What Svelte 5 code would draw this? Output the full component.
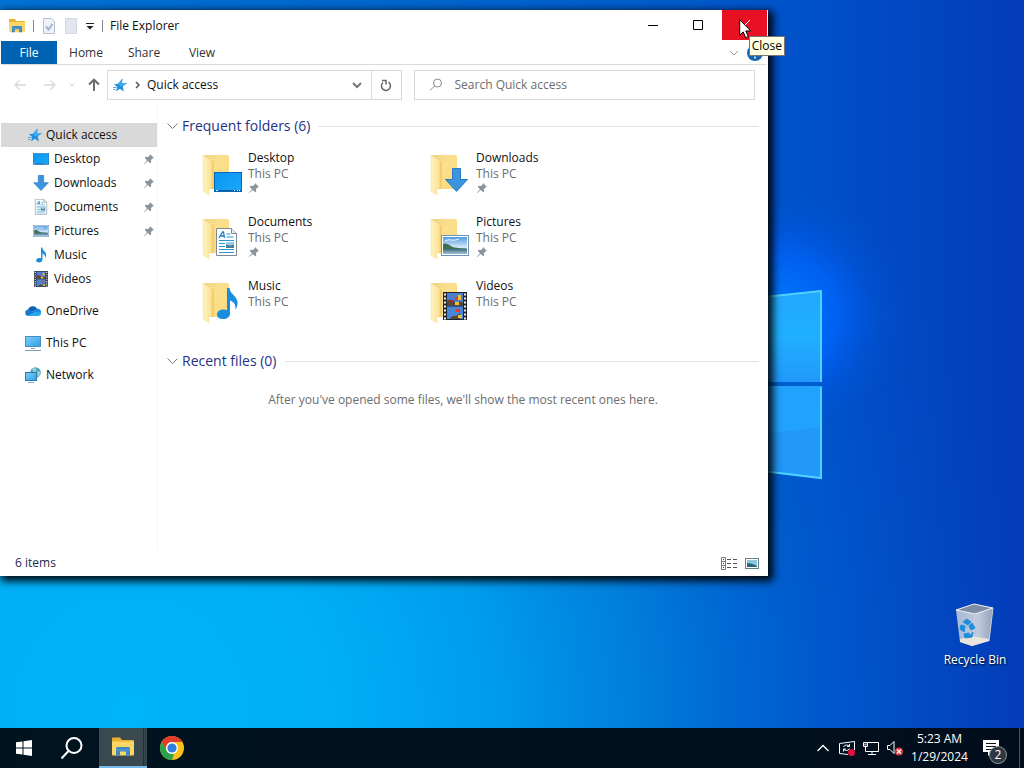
<script lang="ts">
	type Folder = {
		name: string;
		icon: string;
		pinned: boolean;
		box: [number, number, number, number];
	};

	// box: x, y, width, height of the badge drawn over the folder
	const folders: Folder[] = [
		{ name: 'Desktop', icon: 'desktop', pinned: true, box: [14, 22, 28, 20] },
		{ name: 'Downloads', icon: 'downloads', pinned: true, box: [17, 18, 23, 24] },
		{ name: 'Documents', icon: 'documents', pinned: true, box: [16, 14, 21, 28] },
		{ name: 'Pictures', icon: 'pictures', pinned: true, box: [13, 21, 28, 21] },
		{ name: 'Music', icon: 'music', pinned: false, box: [16, 9, 22, 33] },
		{ name: 'Videos', icon: 'videos', pinned: false, box: [15, 14, 24, 28] }
	];

	const places = [
		{ name: 'OneDrive', icon: 'onedrive' },
		{ name: 'This PC', icon: 'thispc' },
		{ name: 'Network', icon: 'network' }
	];

	const tabs = ['Home', 'Share', 'View'];

	let search = $state('');
	let frequentOpen = $state(true);
	let recentOpen = $state(true);
</script>

{#snippet icon(name: string, size: number = 16)}
	<svg class="icon" width={size} height={size} aria-hidden="true"><use href="#{name}" /></svg>
{/snippet}

<svg class="sprite" width="0" height="0" aria-hidden="true">
	<defs>
		<linearGradient id="g-screen" x1="0" y1="0" x2="1" y2="1">
			<stop offset="0" stop-color="#0a96f0" />
			<stop offset="1" stop-color="#1aa8fb" />
		</linearGradient>
		<linearGradient id="g-back" x1="0" y1="0" x2="1" y2="1">
			<stop offset="0" stop-color="#f0d486" />
			<stop offset="0.4" stop-color="#fae08e" />
			<stop offset="1" stop-color="#fbd978" />
		</linearGradient>
		<linearGradient id="g-flap" x1="0" y1="0" x2="1" y2="0">
			<stop offset="0" stop-color="#fff1c0" />
			<stop offset="1" stop-color="#fce294" />
		</linearGradient>
		<linearGradient id="g-sky" x1="0" y1="0" x2="0" y2="1">
			<stop offset="0" stop-color="#4f9be3" />
			<stop offset="0.6" stop-color="#d5e9f7" />
			<stop offset="1" stop-color="#a8cbe4" />
		</linearGradient>
		<linearGradient id="g-lake" x1="0" y1="0" x2="0" y2="1">
			<stop offset="0" stop-color="#3d6d80" />
			<stop offset="1" stop-color="#a3c3d4" />
		</linearGradient>
		<linearGradient id="g-pc" x1="0" y1="0" x2="1" y2="1">
			<stop offset="0" stop-color="#7fd0fa" />
			<stop offset="1" stop-color="#2e9fe6" />
		</linearGradient>
		<linearGradient id="g-bin" x1="0" y1="0" x2="1" y2="0">
			<stop offset="0" stop-color="#b9c6da" />
			<stop offset="0.6" stop-color="#d3d8e1" />
			<stop offset="1" stop-color="#a4acb9" />
		</linearGradient>
	</defs>

	<symbol id="desktop" viewBox="0 0 28 20">
		<rect x="0.5" y="0.5" width="27" height="19" fill="url(#g-screen)" stroke="#0768b4" />
		<path d="M1 18.5h26" stroke="#075b9e" />
		<path d="M2 18.5h2M20 18.5h1M23 18.5h1M25 18.5h1" stroke="#fff" />
	</symbol>
	<symbol id="downloads" viewBox="0 0 23 24">
		<path d="M7.500.5h8v11h7L11.500 23.400.500 11.500h7z" fill="#3b94e0" stroke="#2b7ac6" />
	</symbol>
	<symbol id="documents" viewBox="0 0 21 28">
		<path d="M.5.5h15l5 5v22H.5z" fill="#fff" stroke="#7d8a94" />
		<path d="M15.500.5v5h5" fill="#e8edf0" stroke="#7d8a94" />
		<path d="M3 10l3.500-6h1l1 6M4.500 8h4" fill="none" stroke="#1a82c8" stroke-width="1.300" />
		<path d="M10.500 6h4M10.500 9h7M3 12.500h15M3 15.500h6M3 18.500h6M3 21.500h15M3 24.500h15" stroke="#2b95cf" />
		<rect x="10" y="14" width="8" height="6" fill="#4f7f98" />
		<path d="M10 14h8v2.500l-4 1-4-1z" fill="#9fcbe8" />
	</symbol>
	<symbol id="pictures" viewBox="0 0 28 21">
		<rect x="0.5" y="0.5" width="27" height="20" fill="#fff" stroke="#6d94b5" />
		<rect x="2" y="2" width="24" height="17" fill="url(#g-sky)" />
		<path d="M2 9c3-1 5 0 8 2s7 2 16 2.500V15H2z" fill="#3f7053" />
		<rect x="2" y="14" width="24" height="5" fill="url(#g-lake)" />
		<path d="M4 6q3-2 6-1t8-1" fill="none" stroke="#e9f4fc" />
	</symbol>
	<symbol id="music" viewBox="0 0 22 33">
		<path d="M11 1h2.500c.5 6 7.500 8 8 14 .2 3-.5 5.500-2 8 .3-5-1-8-5.500-9.500V26c0 4-3 6-7 6-3.500 0-6-1.500-6-4.500S4 22.500 7.500 22.500c1.500 0 2.500.2 3.500.7z" fill="#1a8ede" />
	</symbol>
	<symbol id="videos" viewBox="0 0 24 28">
		<rect width="24" height="28" fill="#20242c" />
		<rect x="4" y="1" width="16" height="12.500" fill="#4a7fd2" />
		<rect x="4" y="14.500" width="16" height="12.500" fill="#4a86d8" />
		<path d="M4 9q4-3 7 0t6 0l3 2v2.500H4zM7 27q2-4 6-3l4-3v6z" fill="#5b4630" />
		<path d="M12 5h3v3h-3zM13 17h4v3h-4z" fill="#e53a2c" />
		<path d="M15 3h3v5h-3zM12 10h4v3h-4zM15 23h4v3h-4z" fill="#f2c431" />
		<path d="M7 8h4v2H7z" fill="#a52e3f" />
		<path d="M2 1.500v26M22 1.500v26" stroke="#f1f3f5" stroke-width="2" stroke-dasharray="2 2" />
	</symbol>
	<symbol id="folder" viewBox="0 0 44 48">
		<path d="M3 5h24q2 0 2 2v30q0 2-2 2H9z" fill="url(#g-back)" />
		<path d="M11 12l3-1v28h-3z" fill="#f4cd6d" />
		<path d="M3 5l7 5q1.500 1 1.500 4v23l-2.500 1v7l-6-4z" fill="url(#g-flap)" stroke="#f4dc98" stroke-width="0.500" />
	</symbol>
	<symbol id="star" viewBox="0 0 16 16">
		<path d="M10.500 1.500l-.5 4.500 5 0-4.200 3.200 1 5.300-4-2.800L4 14.500l1.200-4.500L2 7.200l4-.4z" fill="#2390e0" />
		<path d="M10.500 1.500l-.5 4.500 5 0-4.200 3.200L8 9 6 6.800z" fill="#3faaf0" />
		<path d="M1 10.500h3.500M1 12.500h2.500" stroke="#55a7dc" />
	</symbol>
	<symbol id="onedrive" viewBox="0 0 16 16">
		<path d="M3 7a5 5 0 0 1 9-1.500L9 9z" fill="#0f5fb2" />
		<path d="M3 6.500l7 3-7 3.500A3.300 3.300 0 0 1 3 6.500z" fill="#1577cf" />
		<path d="M8 8l4-2.500c2.500 0 4 1.500 4 3.500l-3 2z" fill="#1a8ae0" />
		<path d="M3 13l6-4 7 0c.5 2-.7 4-3 4z" fill="#2aa4ec" />
	</symbol>
	<symbol id="thispc" viewBox="0 0 16 16">
		<rect x="0.5" y="1.500" width="15" height="10" fill="url(#g-pc)" stroke="#4a8fbb" />
		<path d="M6 13.500h4" stroke="#8aa6b8" />
		<path d="M0 15.500h16" stroke="#7f9cb0" />
	</symbol>
	<symbol id="network" viewBox="0 0 16 16">
		<circle cx="10.500" cy="5.500" r="5.300" fill="#4ba2cf" />
		<path d="M7 2q3-2 4 0t-2 4zM12 4q3 0 3.500 2-1 4-3 4z" fill="#9ad0c0" />
		<rect x="0.5" y="5.500" width="11" height="8" fill="url(#g-pc)" stroke="#2b78ab" />
		<path d="M3 15.500h6" stroke="#7fb2d2" />
	</symbol>
	<symbol id="pin" viewBox="0 0 12 12">
		<path d="M7 1l4 4-1.200.2L8 7l.2 2.500-1 .8L4.800 8 1 11.200.8 11 4 7.200 1.700 4.800l.8-1L5 4l1.800-1.800z" fill="#8b959d" />
	</symbol>
	<symbol id="explorer" viewBox="0 0 22 20">
		<path d="M0 1.500q0-1 1-1h7l2 2.500h11q1 0 1 1V16H0z" fill="#e8b130" />
		<path d="M0 4.500h22v13q0 1-1 1H1q-1 0-1-1z" fill="#fcd766" />
		<path d="M4 18.500v-7q0-1.500 1.500-1.500h11q1.500 0 1.500 1.500v7h-4v-4H8v4z" fill="#3f87c5" />
		<path d="M4 13h14" stroke="#5ca0d6" />
	</symbol>
	<symbol id="gallery" viewBox="0 0 14 11">
		<rect x="0.5" y="0.5" width="13" height="10" fill="#fff" stroke="#63808f" />
		<rect x="2" y="2" width="10" height="7" fill="#8cc6dd" />
		<path d="M2 5q5 0 10 3v1H2z" fill="#28647c" />
	</symbol>
</svg>

<div class="screen">
	<main class="desktop">
		<svg class="wallpaper" viewBox="0 0 1024 728" preserveAspectRatio="none" aria-hidden="true">
			<defs>
				<linearGradient id="w-base" x1="0" y1="0" x2="1" y2="0">
					<stop offset="0" stop-color="#0088dc" />
					<stop offset="0.5" stop-color="#0068d0" />
					<stop offset="0.8" stop-color="#0050c8" />
					<stop offset="1" stop-color="#043cb8" />
				</linearGradient>
				<radialGradient id="w-floor" gradientUnits="userSpaceOnUse" cx="130" cy="710" r="900">
					<stop offset="0" stop-color="#00b4fa" />
					<stop offset="0.22" stop-color="#00aff6" />
					<stop offset="0.4" stop-color="#009cec" />
					<stop offset="0.55" stop-color="#0082de" stop-opacity="0.95" />
					<stop offset="0.75" stop-color="#0062d0" stop-opacity="0.6" />
					<stop offset="1" stop-color="#0048c2" stop-opacity="0" />
				</radialGradient>
				<radialGradient id="w-glow" gradientUnits="userSpaceOnUse" cx="780" cy="315" r="130">
					<stop offset="0" stop-color="#007cff" />
					<stop offset="0.45" stop-color="#0064fa" stop-opacity="0.8" />
					<stop offset="0.7" stop-color="#005aea" stop-opacity="0.35" />
					<stop offset="1" stop-color="#0050d0" stop-opacity="0" />
				</radialGradient>
				<linearGradient id="w-pane" x1="0" y1="0" x2="0" y2="1">
					<stop offset="0" stop-color="#22a8ff" />
					<stop offset="0.5" stop-color="#20b0ff" />
					<stop offset="1" stop-color="#2298fa" />
				</linearGradient>
			</defs>
			<rect width="1024" height="728" fill="url(#w-base)" />
			<rect width="1024" height="728" fill="url(#w-floor)" />
			<rect width="1024" height="728" fill="url(#w-glow)" />
			<path d="M680 306l142-16v92H680z" fill="url(#w-pane)" />
			<path d="M680 386h142v93l-142-18z" fill="#2298fa" />
			<path d="M680 386h142v41l-50 6h-92z" fill="#22a2ff" />
			<path d="M680 306l141-15v91M821 387v91l-141-17" fill="none" stroke="#4fd2ff" stroke-width="2" />
			<path d="M680 384h142" stroke="#0060c8" stroke-width="3" />
		</svg>

		<a class="shortcut" href="#recycle-bin">
			<svg width="42" height="46" viewBox="0 0 42 46" aria-hidden="true">
				<path d="M2 8l18-6 19 4-4 33-17 5-12-4z" fill="url(#g-bin)" fill-opacity="0.9" />
				<path d="M2 8l18-6 19 4-18 6z" fill="#7e8ca4" stroke="#eef2f8" />
				<path d="M21 12l-2 31M39 6l-4 33" stroke="#c9d0db" />
				<path d="M6 37l12-3 17 3v2l-17 5-12-4z" fill="#e9e4dc" />
				<path d="M9 20l4-3 4 3-3 3zM18 21l3 5-4 2-2-4zM7 23l4 1-1 6-4-3zM10 32l5-1 1 3 3-4-1 5-7 1z" fill="#1b8ede" stroke="#1b8ede" />
			</svg>
			<span>Recycle Bin</span>
		</a>

		<section class="window" aria-label="File Explorer">
			<header class="titlebar">
				<div class="quick-tools">
					<svg class="icon" width="16" height="16"><use href="#explorer" /></svg>
					<i class="sep"></i>
					<button aria-label="Properties">
						<svg width="14" height="16" viewBox="0 0 14 16">
							<path d="M1.500.5h8l3 3v12h-11z" fill="#eef2f9" stroke="#b4bfd0" />
							<path d="M4 8.500l2.500 3L10.500 6" fill="none" stroke="#a3b4d0" stroke-width="2" />
						</svg>
					</button>
					<button aria-label="New folder">
						<svg width="14" height="16" viewBox="0 0 14 16">
							<path d="M1.500.5h11v15h-11z" fill="#e1e6ef" stroke="#d2d8e3" />
						</svg>
					</button>
					<button aria-label="Customize Quick Access Toolbar">
						<svg width="8" height="8" viewBox="0 0 8 8">
							<path d="M0 1.500h8" stroke="#222" />
							<path d="M.5 4h7L4 7.500z" fill="#222" />
						</svg>
					</button>
					<i class="sep"></i>
				</div>
				<h1>File Explorer</h1>
				<div class="controls">
					<button aria-label="Minimize">
						<svg width="10" height="10" viewBox="0 0 10 10"><path d="M0 5.500h10" stroke="#000" /></svg>
					</button>
					<button aria-label="Maximize">
						<svg width="10" height="10" viewBox="0 0 10 10">
							<path d="M.5.5h9v9h-9z" fill="none" stroke="#000" />
						</svg>
					</button>
					<button class="close" aria-label="Close">
						<svg width="10" height="10" viewBox="0 0 10 10">
							<path d="M0 0l10 10M10 0L0 10" stroke="#fff" />
						</svg>
					</button>
				</div>
				<svg class="cursor" width="13" height="20" viewBox="0 0 13 20" aria-hidden="true">
					<path d="M.7.8v15.400l3.500-3.300 2.500 5.800 2.600-1.100-2.500-5.700h5z" fill="#fff" stroke="#000" />
				</svg>
				<div class="tooltip" role="tooltip">Close</div>
			</header>

			<div class="ribbon">
				<button class="file">File</button>
				{#each tabs as tab (tab)}
					<button>{tab}</button>
				{/each}
				<div class="ribbon-end">
					<button aria-label="Expand the Ribbon">
						<svg width="10" height="6" viewBox="0 0 10 6">
							<path d="M1 1l4 4 4-4" fill="none" stroke="#9a9a9a" />
						</svg>
					</button>
					<button aria-label="Help">
						<svg width="16" height="16" viewBox="0 0 16 16">
							<circle cx="8" cy="8" r="8" fill="#1565b0" />
							<path d="M5.500 6a2.500 2.500 0 1 1 3.500 2.300q-1 .5-1 1.700M8 11.500v2" fill="none" stroke="#fff" stroke-width="1.500" />
						</svg>
					</button>
				</div>
			</div>

			<div class="address-row">
				<div class="history">
					<button aria-label="Back" disabled>
						<svg width="14" height="12" viewBox="0 0 14 12">
							<path d="M13 6H2M6.500 1.500L2 6l4.500 4.500" fill="none" stroke="#d8d8d8" stroke-width="1.300" />
						</svg>
					</button>
					<button aria-label="Forward" disabled>
						<svg width="14" height="12" viewBox="0 0 14 12">
							<path d="M1 6h11M7.500 1.500L12 6l-4.500 4.500" fill="none" stroke="#d8d8d8" stroke-width="1.300" />
						</svg>
					</button>
					<button class="small" aria-label="Recent locations" disabled>
						<svg width="6" height="4" viewBox="0 0 6 4">
							<path d="M.5.5L3 3 5.500.5" fill="none" stroke="#ccc" />
						</svg>
					</button>
					<button aria-label="Up">
						<svg width="14" height="14" viewBox="0 0 14 14">
							<path d="M7 13V2M2 6.500L7 1.700l5 4.800" fill="none" stroke="#6d6d6d" stroke-width="2" />
						</svg>
					</button>
				</div>
				<div class="address">
					{@render icon('star')}
					<svg width="5" height="8" viewBox="0 0 5 8">
						<path d="M1 1l3 3-3 3" fill="none" stroke="#555" stroke-width="1.500" />
					</svg>
					<a href="#quick-access">Quick access</a>
					<button class="drop" aria-label="Previous locations">
						<svg width="10" height="7" viewBox="0 0 10 7">
							<path d="M1 1l4 4 4-4" fill="none" stroke="#777" stroke-width="2" />
						</svg>
					</button>
					<button class="refresh" aria-label="Refresh">
						<svg width="12" height="13" viewBox="0 0 12 13">
							<path d="M3 3.500A4.500 4.500 0 1 0 8.500 3.200" fill="none" stroke="#666" stroke-width="1.500" />
							<path d="M2 1.500h4v4" fill="none" stroke="#666" stroke-width="1.500" />
						</svg>
					</button>
				</div>
				<label class="search">
					<svg width="14" height="14" viewBox="0 0 14 14" aria-hidden="true">
						<circle cx="8.500" cy="5" r="4" fill="none" stroke="#888" />
						<path d="M5.500 8L1 12.500" stroke="#888" />
					</svg>
					<input type="search" placeholder="Search Quick access" aria-label="Search Quick access" bind:value={search} />
				</label>
			</div>

			<div class="body">
				<nav>
					<div class="group">
						<a class="selected" href="#quick-access">{@render icon('star')}Quick access</a>
						{#each folders as folder (folder.name)}
							<a class="child" href="#{folder.name}">
								{@render icon(folder.icon)}
								{folder.name}
								{#if folder.pinned}
									<span class="pin">{@render icon('pin', 12)}</span>
								{/if}
							</a>
						{/each}
					</div>
					{#each places as place (place.name)}
						<div class="group">
							<a href="#{place.name}">{@render icon(place.icon)}{place.name}</a>
						</div>
					{/each}
				</nav>

				<div class="content">
					<h2>
						<button onclick={() => (frequentOpen = !frequentOpen)}>
							<svg width="11" height="7" viewBox="0 0 11 7">
								<path d="M.5.5l5 5 5-5" fill="none" stroke="#777" />
							</svg>
							Frequent folders (6)
						</button>
					</h2>
					{#if frequentOpen}
						<div class="folders">
							{#each folders as folder (folder.name)}
								{@const [x, y, width, height] = folder.box}
								<a class="folder" href="#{folder.name}">
									<svg width="44" height="48" viewBox="0 0 44 48" aria-hidden="true">
										<use href="#folder" width="44" height="48" />
										<use href="#{folder.icon}" {x} {y} {width} {height} />
									</svg>
									<span class="details">
										<span>{folder.name}</span>
										<span class="where">This PC</span>
										{#if folder.pinned}
											{@render icon('pin', 12)}
										{/if}
									</span>
								</a>
							{/each}
						</div>
					{/if}

					<h2>
						<button onclick={() => (recentOpen = !recentOpen)}>
							<svg width="11" height="7" viewBox="0 0 11 7">
								<path d="M.5.5l5 5 5-5" fill="none" stroke="#777" />
							</svg>
							Recent files (0)
						</button>
					</h2>
					{#if recentOpen}
						<p class="empty">After you've opened some files, we'll show the most recent ones here.</p>
					{/if}
				</div>
			</div>

			<footer class="statusbar">
				<span>6 items</span>
				<button aria-label="Details view">
					<svg width="16" height="13" viewBox="0 0 16 13">
						<path d="M.5.5h4v12h-4zM.5 4.500h4M.5 8.500h4" fill="none" stroke="#777" />
						<path d="M6 2.500h4M12 2.500h4M6 6.500h4M12 6.500h4M6 10.500h4M12 10.500h4" stroke="#555" />
						<path d="M2 2.500h1M2 6.500h1M2 10.500h1" stroke="#333" />
					</svg>
				</button>
				<button aria-label="Large icons view">
					<svg width="14" height="11"><use href="#gallery" /></svg>
				</button>
			</footer>
		</section>
	</main>

	<footer class="taskbar">
		<button aria-label="Start">
			<svg width="16" height="16" viewBox="0 0 16 16">
				<path d="M0 2.300L6.500 1.400v6.100H0zM7.500 1.200L16 0v7.500H7.500zM0 8.500h6.500v6.100L0 13.700zM7.500 8.500H16V16l-8.500-1.200z" fill="#fff" />
			</svg>
		</button>
		<button aria-label="Search">
			<svg width="24" height="24" viewBox="0 0 24 24">
				<circle cx="14" cy="9.500" r="7.500" fill="none" stroke="#fff" stroke-width="2" />
				<path d="M8.500 15L1.500 22.500" stroke="#fff" stroke-width="2" />
			</svg>
		</button>
		<button class="running" aria-label="File Explorer">
			<svg width="22" height="20"><use href="#explorer" /></svg>
		</button>
		<button aria-label="Google Chrome">
			<svg width="24" height="24" viewBox="0 0 24 24">
				<circle cx="12" cy="12" r="12" fill="#fbc116" />
				<path d="M1.600 6A12 12 0 0 1 22.400 6H12a6 6 0 0 0-5.200 9z" fill="#e33b2e" />
				<path d="M1.600 6l5.200 9a6 6 0 0 0 7.200 2.600L12 24A12 12 0 0 1 1.600 6z" fill="#2ba24c" />
				<circle cx="12" cy="12" r="6" fill="#fff" />
				<circle cx="12" cy="12" r="4.600" fill="#2f7de1" />
			</svg>
		</button>

		<div class="tray">
			<button aria-label="Show hidden icons">
				<svg width="12" height="8" viewBox="0 0 12 8">
					<path d="M.5 7L6 1.500 11.500 7" fill="none" stroke="#fff" stroke-width="1.300" />
				</svg>
			</button>
			<button aria-label="Updates">
				<svg width="16" height="16" viewBox="0 0 16 16">
					<path d="M9 14.500L.5 13.500V3.500l15-2V10" fill="none" stroke="#fff" />
					<path d="M4.500 7q1-2 3-2 1.500 0 2.500 1M10.500 4v2.500H8M10.500 8.500q-1 2-3 2-1.500 0-2.500-1M4.500 11.500V9H7" fill="none" stroke="#fff" />
					<circle cx="12.500" cy="12.500" r="3.500" fill="#e0103c" />
				</svg>
			</button>
			<button aria-label="Network">
				<svg width="16" height="16" viewBox="0 0 16 16">
					<path d="M5 2.500h10.500v9H2.500V7M9 11.500v3M5 14.500h8" fill="none" stroke="#fff" />
					<path d="M.5 2.500h4v4h-4zM2 3.500v2M3 3.500v2" fill="none" stroke="#fff" />
				</svg>
			</button>
			<button aria-label="Volume">
				<svg width="16" height="16" viewBox="0 0 16 16">
					<path d="M.5 5.500H3l4-4v12l-4-4H.5z" fill="none" stroke="#fff" />
					<circle cx="12" cy="11.500" r="4" fill="#d93a3a" />
					<path d="M10 9.500l4 4M14 9.500l-4 4" stroke="#fff" stroke-width="1.300" />
				</svg>
			</button>
			<button class="clock">
				<time>5:23 AM</time>
				<time>1/29/2024</time>
			</button>
			<button class="notifications" aria-label="2 new notifications">
				<svg width="16" height="16" viewBox="0 0 16 16">
					<path d="M0 0h16v12H9l-4 4v-4H0z" fill="#fff" />
					<path d="M3 3.500h10M3 6.500h10M3 9.500h7" stroke="#05111e" />
				</svg>
				<span class="count">2</span>
			</button>
			<button class="show-desktop" aria-label="Show desktop"></button>
		</div>
	</footer>
</div>

<style>
	:global(body) {
		margin: 0;
	}

	.screen {
		display: flex;
		flex-direction: column;
		height: 100vh;
		overflow: hidden;
		font-family: 'Open Sans', 'Noto Sans', sans-serif;
		font-size: 12px;
		line-height: 16px;
		color: #111;
	}

	.sprite {
		position: absolute;
	}

	.icon {
		flex-shrink: 0;
	}

	button {
		display: flex;
		align-items: center;
		justify-content: center;
		padding: 0;
		border: none;
		background: none;
		color: inherit;
		font: inherit;
	}

	a {
		color: inherit;
		text-decoration: none;
	}

	.desktop {
		position: relative;
		flex: 1;
		min-height: 0;
		overflow: hidden;
	}

	.wallpaper {
		position: absolute;
		width: 100%;
		height: 100%;
	}

	.shortcut {
		position: absolute;
		right: 12px;
		bottom: 60px;
		width: 74px;
		display: flex;
		flex-direction: column;
		align-items: center;
		gap: 4px;
		color: #fff;
		text-shadow: 1px 1px 2px #000;
		white-space: nowrap;
	}

	.window {
		position: absolute;
		top: 10px;
		right: 25%;
		bottom: 152px;
		left: 0;
		display: flex;
		flex-direction: column;
		box-sizing: border-box;
		padding: 0 1px;
		background: #fff;
		box-shadow: 3px 3px 8px 2px rgba(0, 0, 0, 0.95);
	}

	.titlebar {
		position: relative;
		display: flex;
		align-items: stretch;
		height: 31px;
	}

	.quick-tools {
		display: flex;
		align-items: center;
		gap: 8px;
		padding: 0 7px 0 8px;
	}

	.sep {
		width: 1px;
		height: 12px;
		background: #888;
	}

	h1 {
		flex: 1;
		margin: 0;
		font-size: 12px;
		font-weight: 400;
		line-height: 31px;
	}

	.controls {
		display: flex;
		height: 30px;
	}

	.controls button {
		width: 45px;
	}

	.controls .close {
		margin-left: 2px;
		background: #e81123;
	}

	.cursor {
		position: absolute;
		z-index: 2;
		top: 9px;
		right: 15px;
	}

	.tooltip {
		position: absolute;
		z-index: 1;
		top: 26px;
		right: -18px;
		padding: 1px 2px;
		border: 1px solid #767676;
		background: #ffffe1;
		color: #000;
	}

	.ribbon {
		display: flex;
		height: 23px;
		border-bottom: 1px solid #dadbdc;
		color: #333;
	}

	.ribbon button {
		width: 58px;
	}

	.ribbon .file {
		width: 56px;
		background: #0063b1;
		color: #fff;
	}

	.ribbon-end {
		display: flex;
		gap: 8px;
		margin-left: auto;
		padding-right: 4px;
	}

	.ribbon-end button {
		width: auto;
	}

	.address-row {
		display: flex;
		gap: 12px;
		height: 30px;
		padding: 5px 12px 4px;
	}

	.history {
		display: flex;
		align-items: center;
		gap: 16px;
		margin-right: -6px;
	}

	.history .small {
		margin: 0 -4px;
	}

	.address,
	.search {
		display: flex;
		align-items: center;
		box-sizing: border-box;
		border: 1px solid #d9d9d9;
	}

	.address {
		flex: 289;
		gap: 7px;
		padding-left: 4px;
	}

	.drop {
		margin: 0 2px 0 auto;
	}

	.refresh {
		align-self: stretch;
		width: 30px;
		border-left: 1px solid #d9d9d9;
	}

	.search {
		flex: 326;
		gap: 12px;
		padding-left: 14px;
	}

	.search input {
		flex: 1;
		min-width: 0;
		padding: 0;
		border: none;
		outline: none;
		background: none;
		font: inherit;
	}

	.search input::placeholder {
		color: #6d6d6d;
		opacity: 1;
	}

	.body {
		display: flex;
		flex: 1;
		min-height: 0;
	}

	nav {
		display: flex;
		flex-direction: column;
		gap: 8px;
		width: 156px;
		padding-top: 19px;
		border-right: 1px solid #f7f7f7;
	}

	nav a {
		display: flex;
		align-items: center;
		gap: 5px;
		height: 24px;
		padding: 0 2px 0 24px;
	}

	nav .child {
		padding-left: 32px;
	}

	nav .selected {
		gap: 3px;
		padding-left: 26px;
		background: #d9d9d9;
	}

	.pin {
		display: flex;
		margin-left: auto;
	}

	.content {
		flex: 1;
		padding: 11px 8px 0 9px;
		overflow: hidden;
	}

	h2 {
		display: flex;
		align-items: center;
		gap: 8px;
		margin: 0;
		color: #1e3287;
		font-size: 14px;
		font-weight: 400;
		line-height: 22px;
	}

	h2::after {
		content: '';
		flex: 1;
		height: 1px;
		background: #e2e2e2;
	}

	h2 button {
		gap: 4px;
	}

	.folders {
		display: grid;
		grid-template-columns: repeat(auto-fill, 228px);
		grid-auto-rows: 64px;
		padding: 13px 33px 8px;
	}

	.folder {
		display: flex;
		align-items: flex-start;
		gap: 4px;
	}

	.details {
		display: flex;
		flex-direction: column;
	}

	.where {
		color: #6d6d6d;
	}

	.empty {
		margin: 20px 0 0;
		color: #6d6d6d;
		text-align: center;
	}

	.statusbar {
		display: flex;
		align-items: center;
		gap: 8px;
		height: 26px;
		padding: 0 8px 0 14px;
		color: #1e2a4a;
	}

	.statusbar span {
		flex: 1;
	}

	.taskbar {
		display: flex;
		height: 40px;
		background: linear-gradient(90deg, #00141f, #020d1c);
		color: #fff;
	}

	.taskbar > button {
		width: 48px;
	}

	.taskbar .running {
		margin: 0 1px 0 3px;
		border-bottom: 2px solid #76b9ed;
		background: linear-gradient(90deg, #3a4850 44px, #1f2d36 44px 45px, #34424a 45px);
	}

	.tray {
		display: flex;
		align-items: center;
		gap: 8px;
		margin-left: auto;
	}

	.tray button {
		min-width: 16px;
	}

	.clock {
		flex-direction: column;
		width: 57px;
		line-height: 18px;
		white-space: nowrap;
	}

	.notifications {
		position: relative;
		width: 30px;
		height: 40px;
		margin-right: 5px;
	}

	.count {
		position: absolute;
		right: 0;
		bottom: 5px;
		width: 16px;
		border-radius: 50%;
		background: #2e3740;
		box-shadow: 0 0 0 1px #8a9299;
	}

	.tray .show-desktop {
		min-width: 5px;
		height: 40px;
		border-left: 1px solid #4a545e;
	}
</style>
